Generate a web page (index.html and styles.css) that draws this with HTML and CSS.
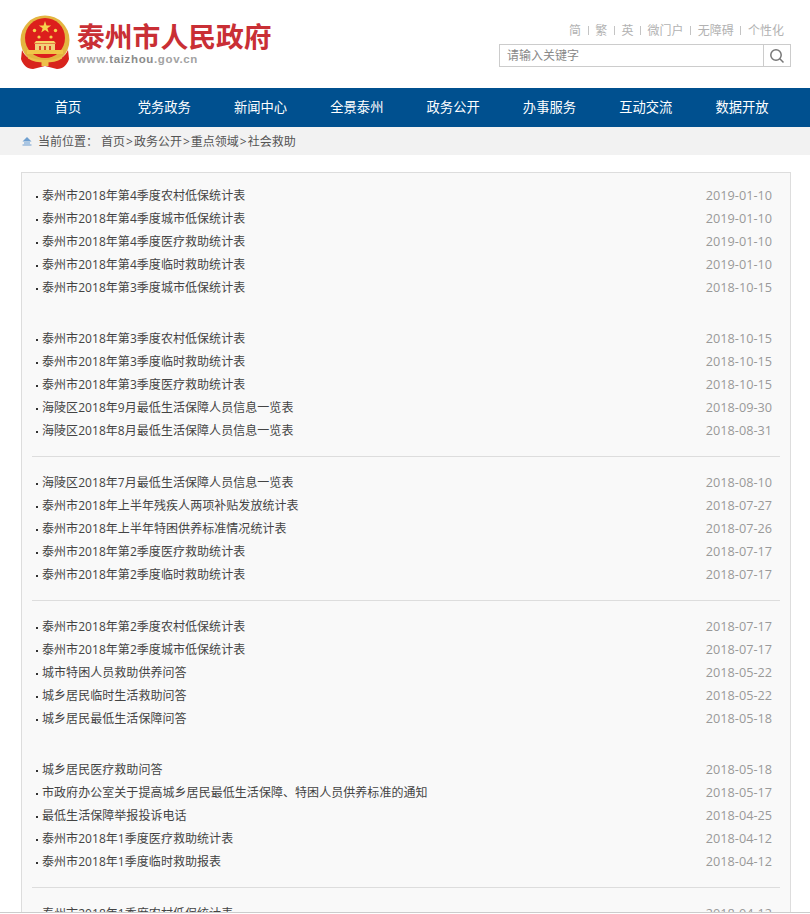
FILE: index.html
```html
<!DOCTYPE html>
<html lang="zh-CN">
<head>
  <meta charset="UTF-8" />
  <title>社会救助 - 泰州市人民政府</title>
  <link rel="stylesheet" href="styles.css">
</head>
<body>
  <div class="header">
    <a class="logo">
      <svg class="emblem" width="50" height="56" viewBox="0 0 50 56">
        <circle cx="25" cy="25" r="24.5" fill="#e3b540"/>
        <circle cx="25" cy="23" r="20" fill="#dc1f1c"/>
        <polygon points="25,6 26.5,10.4 31.2,10.4 27.4,13.2 28.8,17.6 25,15 21.2,17.6 22.6,13.2 18.8,10.4 23.5,10.4" fill="#f6d24e"/>
        <circle cx="14.5" cy="15.5" r="1.7" fill="#f6d24e"/>
        <circle cx="35.5" cy="15.5" r="1.7" fill="#f6d24e"/>
        <circle cx="19" cy="22" r="1.6" fill="#f6d24e"/>
        <circle cx="31" cy="22" r="1.6" fill="#f6d24e"/>
        <path d="M16 26h18l2 2.5H14z" fill="#f6d86a"/>
        <path d="M15 29h20v6H15z" fill="#f0d27a"/>
        <path d="M19 31h2v4h-2zM24 31h2v4h-2zM29 31h2v4h-2z" fill="#dc4a2a"/>
        <path d="M7 35h36v4H7z" fill="#f0c648"/>
        <path d="M2 35c3 7 9 12 23 12s20-5 23-12l1 9c-2 6-6 10-12 10l-12-3-12 3C7 54 3 50 1 44z" fill="#d8241c"/>
        <path d="M8 41c5 3 10 4 17 4s12-1 17-4v2.500c-5 3-10 4-17 4s-12-1-17-4z" fill="#eec04a"/>
        <rect x="21.500" y="46" width="7" height="5" fill="#eec04a"/>
      </svg>
      <div class="logo-text">
        <div class="logo-name">泰州市人民政府</div>
        <div class="logo-url">www.<b>taizhou</b>.gov.cn</div>
      </div>
    </a>
    <div class="header-right">
      <div class="top-links">
        <a>简</a><i></i><a>繁</a><i></i><a>英</a><i></i><a>微门户</a><i></i><a>无障碍</a><i></i><a>个性化</a>
      </div>
      <div class="search">
        <span class="search-input">请输入关键字</span>
        <span class="search-btn">
          <svg width="16" height="16" viewBox="0 0 16 16" fill="none" stroke="#777" stroke-width="1.5">
            <circle cx="7" cy="7" r="5.2"/>
            <path d="M10.8 10.8L14.5 14.5"/>
          </svg>
        </span>
      </div>
    </div>
  </div>

  <div class="nav">
    <a>首页</a>
    <a>党务政务</a>
    <a>新闻中心</a>
    <a>全景泰州</a>
    <a>政务公开</a>
    <a>办事服务</a>
    <a>互动交流</a>
    <a>数据开放</a>
  </div>

  <div class="crumb">
    <svg width="10" height="10" viewBox="0 0 10 10">
      <path d="M5 1L0.5 5.500h9z" fill="#6f9fd0"/>
      <path d="M2 6h6v2.200H2z" fill="#a9c6e4"/>
      <path d="M0.500 8.500h9v1h-9z" fill="#6f9fd0"/>
    </svg>
    <span class="crumb-label">当前位置：</span>
    <a>首页</a><i>&gt;</i><a>政务公开</a><i>&gt;</i><a>重点领域</a><i>&gt;</i><a>社会救助</a>
  </div>

  <div class="panel">
    <ul class="group">
      <li><a>泰州市2018年第4季度农村低保统计表</a><span>2019-01-10</span></li>
      <li><a>泰州市2018年第4季度城市低保统计表</a><span>2019-01-10</span></li>
      <li><a>泰州市2018年第4季度医疗救助统计表</a><span>2019-01-10</span></li>
      <li><a>泰州市2018年第4季度临时救助统计表</a><span>2019-01-10</span></li>
      <li><a>泰州市2018年第3季度城市低保统计表</a><span>2018-10-15</span></li>
    </ul>
    <ul class="group line">
      <li><a>泰州市2018年第3季度农村低保统计表</a><span>2018-10-15</span></li>
      <li><a>泰州市2018年第3季度临时救助统计表</a><span>2018-10-15</span></li>
      <li><a>泰州市2018年第3季度医疗救助统计表</a><span>2018-10-15</span></li>
      <li><a>海陵区2018年9月最低生活保障人员信息一览表</a><span>2018-09-30</span></li>
      <li><a>海陵区2018年8月最低生活保障人员信息一览表</a><span>2018-08-31</span></li>
    </ul>
    <ul class="group line">
      <li><a>海陵区2018年7月最低生活保障人员信息一览表</a><span>2018-08-10</span></li>
      <li><a>泰州市2018年上半年残疾人两项补贴发放统计表</a><span>2018-07-27</span></li>
      <li><a>泰州市2018年上半年特困供养标准情况统计表</a><span>2018-07-26</span></li>
      <li><a>泰州市2018年第2季度医疗救助统计表</a><span>2018-07-17</span></li>
      <li><a>泰州市2018年第2季度临时救助统计表</a><span>2018-07-17</span></li>
    </ul>
    <ul class="group">
      <li><a>泰州市2018年第2季度农村低保统计表</a><span>2018-07-17</span></li>
      <li><a>泰州市2018年第2季度城市低保统计表</a><span>2018-07-17</span></li>
      <li><a>城市特困人员救助供养问答</a><span>2018-05-22</span></li>
      <li><a>城乡居民临时生活救助问答</a><span>2018-05-22</span></li>
      <li><a>城乡居民最低生活保障问答</a><span>2018-05-18</span></li>
    </ul>
    <ul class="group line">
      <li><a>城乡居民医疗救助问答</a><span>2018-05-18</span></li>
      <li><a>市政府办公室关于提高城乡居民最低生活保障、特困人员供养标准的通知</a><span>2018-05-17</span></li>
      <li><a>最低生活保障举报投诉电话</a><span>2018-04-25</span></li>
      <li><a>泰州市2018年1季度医疗救助统计表</a><span>2018-04-12</span></li>
      <li><a>泰州市2018年1季度临时救助报表</a><span>2018-04-12</span></li>
    </ul>
    <ul class="group">
      <li><a>泰州市2018年1季度农村低保统计表</a><span>2018-04-12</span></li>
    </ul>
  </div>

  <div class="window-edge"></div>
</body>
</html>
```

FILE: styles.css
```css
* { box-sizing: border-box; margin: 0; padding: 0; }
html, body { height: 914px; overflow: hidden; }
body { font-family: "Open Sans", "Noto Sans CJK SC", sans-serif; font-size: 12px; color: #444; background: #fff; }
ul { list-style: none; }
i { font-style: normal; }

.header { height: 88px; display: flex; justify-content: space-between; padding: 15px 19px 0 20px; }
.logo { display: flex; }
.emblem { margin-right: 7px; }
.logo-name { font-family: "Noto Sans CJK SC", sans-serif; font-size: 27.8px; font-weight: 700; line-height: 33px; padding-top: 4px; color: #c92f35; white-space: nowrap; }
.logo-url { font-family: "Liberation Sans", sans-serif; font-size: 11.5px; font-weight: 700; line-height: 14px; color: #a3a3a3; letter-spacing: 0.65px; }
.logo-url b { color: #8b8b8b; }

.header-right { width: 292px; padding-top: 6px; }
.top-links { display: flex; justify-content: flex-end; align-items: center; height: 18px; padding-right: 7px; color: #b2b2b2; white-space: nowrap; }
.top-links i { width: 1px; height: 9px; background: #c4c4c4; margin: 0 6.6px; }
.search { display: flex; height: 23px; margin-top: 5px; border: 1px solid #ccc; }
.search-input { flex: 1; padding-left: 7px; line-height: 21px; color: #888; }
.search-btn { width: 27px; border-left: 1px solid #ccc; display: flex; align-items: center; justify-content: center; }

.nav { height: 39px; background: #00508f; display: grid; grid-template-columns: repeat(8, 96.3px); justify-content: center; }
.nav a { font-size: 13.3px; line-height: 39px; color: #fff; text-align: center; white-space: nowrap; }

.crumb { height: 28px; background: #f2f2f2; display: flex; align-items: center; padding-left: 22px; color: #555; }
.crumb svg { margin-right: 6px; }
.crumb-label { margin-right: 3px; }
.crumb i { margin: 0 1px; }

.panel { margin: 17px 19px 0 21px; padding: 10.8px 10px 0; background: #f9f9f9; border: 1px solid #ddd; }
.group { height: 129.6px; margin-bottom: 14px; }
.group.line { border-bottom: 1px solid #ddd; }
.group li { height: 23px; line-height: 23px; display: flex; justify-content: space-between; padding: 0 8px 0 10px; position: relative; white-space: nowrap; letter-spacing: 0.05px; }
.group li::before { content: ""; position: absolute; left: 4px; top: 12px; width: 2px; height: 2px; background: #333; }
.group li span { font-size: 12.7px; letter-spacing: 0; color: #999; }

.window-edge { position: fixed; left: 0; right: 0; bottom: 0; height: 2px; background: #fff; border-top: 1px solid #ccc; }
```
